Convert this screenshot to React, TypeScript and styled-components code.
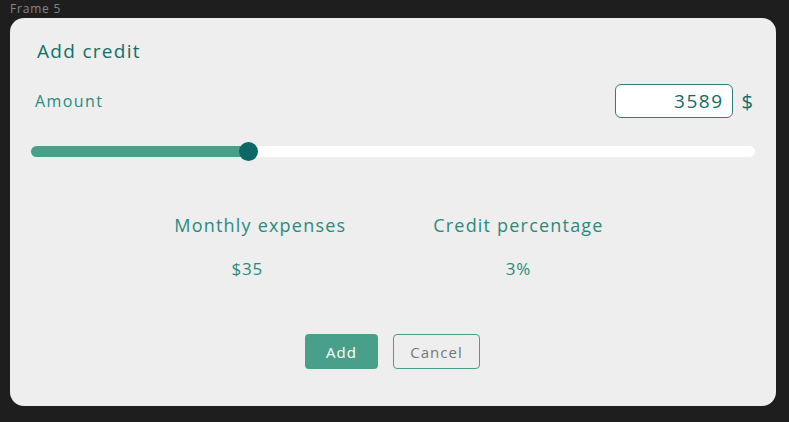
import React, { useState } from "react";
import styled, { createGlobalStyle } from "styled-components";

const Global = createGlobalStyle`
  html, body { margin: 0; padding: 0; background: #1e1e1e; }
  body { font-family: "Open Sans", "Noto Sans", sans-serif; }
  * { box-sizing: border-box; }
`;

const Page = styled.div`
  width: 789px;
  height: 422px;
  background: #1e1e1e;
  padding: 0 13px 0 10px;
  display: flex;
  flex-direction: column;
`;

const FrameLabel = styled.div`
  height: 18px;
  font-size: 12px;
  line-height: 17px;
  color: #858585;
  letter-spacing: 0.8px;
`;

const Card = styled.div`
  width: 766px;
  height: 388px;
  background: #eeeeee;
  border-radius: 14px;
  padding: 20px 21px 0 21px;
  display: flex;
  flex-direction: column;
`;

const Title = styled.h1`
  margin: 0 0 0 6px;
  font-size: 19px;
  font-weight: 500;
  line-height: 26px;
  color: #12706a;
  letter-spacing: 1.3px;
`;

const AmountRow = styled.div`
  margin-top: 20px;
  display: flex;
  align-items: center;
  height: 34px;
`;

const Label = styled.span`
  margin-left: 4px;
  font-size: 16px;
  color: #2a8b7c;
  letter-spacing: 1.4px;
  flex: 1;
`;

const AmountInput = styled.input`
  width: 118px;
  height: 34px;
  border: 1px solid #2f7d78;
  border-radius: 6px;
  background: #ffffff;
  text-align: right;
  padding: 0 8px 0 10px;
  font-family: inherit;
  font-size: 19px;
  letter-spacing: 1.5px;
  color: #136b66;
  outline: none;
`;

const Currency = styled.span`
  margin: 0 2px 0 9px;
  font-size: 20px;
  color: #136b66;
`;

const SliderWrap = styled.div`
  margin-top: 23px;
  position: relative;
  height: 20px;
  display: flex;
  align-items: center;
`;

const Track = styled.div`
  position: relative;
  width: 100%;
  height: 11px;
  border-radius: 6px;
  background: #ffffff;
`;

const Fill = styled.div`
  height: 100%;
  border-radius: 6px;
  background: #48a08a;
`;

const Thumb = styled.div`
  position: absolute;
  top: 50%;
  width: 19px;
  height: 19px;
  margin-left: -9.5px;
  margin-top: -9.5px;
  border-radius: 50%;
  background: #0c6866;
`;

const Stats = styled.div`
  margin-top: 52px;
  display: flex;
  justify-content: center;
  gap: 87px;
  padding-right: 8px;
`;

const Stat = styled.div`
  display: flex;
  flex-direction: column;
  align-items: center;
`;

const StatLabel = styled.div`
  font-size: 18px;
  line-height: 24px;
  color: #2a8b7c;
  letter-spacing: 1.2px;
`;

const StatValue = styled.div<{ $shift?: number }>`
  margin-top: 20px;
  margin-right: ${(p) => p.$shift ?? 0}px;
  font-size: 17px;
  line-height: 24px;
  letter-spacing: 0.8px;
  color: #2a8b7c;
`;

const Buttons = styled.div`
  margin-top: 53px;
  display: flex;
  justify-content: center;
  gap: 15px;
  padding-right: 1px;
`;

const Button = styled.button<{ $primary?: boolean }>`
  height: 35px;
  border-radius: 4px;
  font-family: inherit;
  font-size: 15px;
  letter-spacing: 1px;
  cursor: pointer;
  padding: 0;
  width: ${(p) => (p.$primary ? "73px" : "87px")};
  background: ${(p) => (p.$primary ? "#48a08a" : "transparent")};
  color: ${(p) => (p.$primary ? "#ffffff" : "#777777")};
  border: ${(p) => (p.$primary ? "none" : "1.5px solid #48a08a")};
`;

export default function App() {
  const [amount, setAmount] = useState("3589");
  const pct = 30.1;
  return (
    <>
      <Global />
      <Page>
        <FrameLabel>Frame 5</FrameLabel>
        <Card>
          <Title>Add credit</Title>
          <AmountRow>
            <Label>Amount</Label>
            <AmountInput value={amount} onChange={(e) => setAmount(e.target.value)} />
            <Currency>$</Currency>
          </AmountRow>
          <SliderWrap>
            <Track>
              <Fill style={{ width: `${pct}%` }} />
              <Thumb style={{ left: `${pct}%` }} />
            </Track>
          </SliderWrap>
          <Stats>
            <Stat>
              <StatLabel>Monthly expenses</StatLabel>
              <StatValue $shift={26}>$35</StatValue>
            </Stat>
            <Stat>
              <StatLabel>Credit percentage</StatLabel>
              <StatValue>3%</StatValue>
            </Stat>
          </Stats>
          <Buttons>
            <Button $primary>Add</Button>
            <Button>Cancel</Button>
          </Buttons>
        </Card>
      </Page>
    </>
  );
}
